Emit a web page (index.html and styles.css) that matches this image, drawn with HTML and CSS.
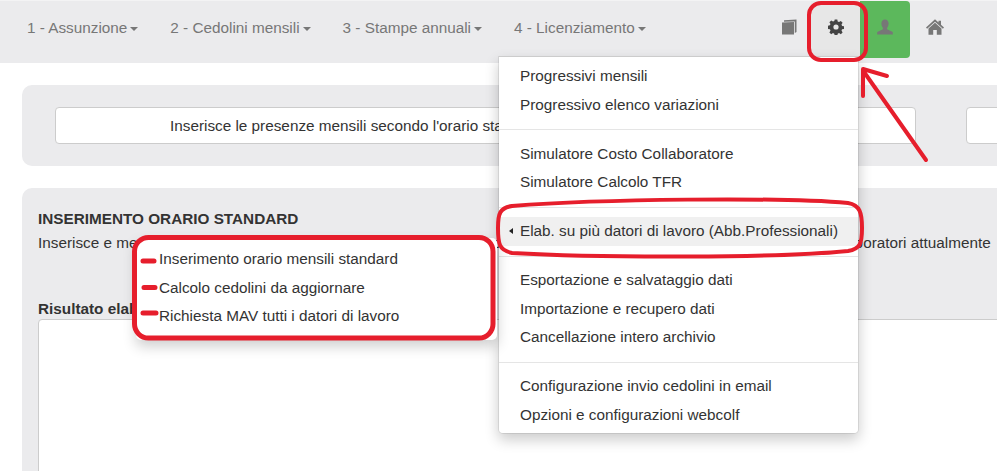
FILE: index.html
```html
<!DOCTYPE html>
<html lang="it">
<head>
<meta charset="utf-8">
<title>Webcolf</title>
<link rel="stylesheet" href="styles.css">
</head>
<body>
<nav class="navbar">
  <ul class="nav-left">
    <li>1 - Assunzione<span class="caret"></span></li>
    <li>2 - Cedolini mensili<span class="caret"></span></li>
    <li>3 - Stampe annuali<span class="caret"></span></li>
    <li>4 - Licenziamento<span class="caret"></span></li>
  </ul>
  <ul class="nav-right">
    <li class="cell cell-book">
      <svg class="icon" viewBox="0 0 16 16"><path class="ic" d="M3 1.200 15.500.5V13L13.800 14V2.500L3 2.800Z"/><path class="ic" d="M1 3.400 13 3V15.500H1Z"/></svg>
    </li>
    <li class="cell active">
      <svg class="icon" viewBox="0 0 16 16"><path class="ic-dark" fill-rule="evenodd" d="M6.700.5h2.600l.4 2 1.300.6 1.800-1.100 1.800 1.800-1.100 1.800.6 1.300 2 .4v2.600l-2 .4-.6 1.300 1.100 1.800-1.800 1.800-1.800-1.100-1.300.6-.4 2H6.700l-.4-2-1.300-.6-1.800 1.100-1.800-1.800 1.100-1.800-.6-1.300-2-.4V6.700l2-.4.6-1.300L1.400 3.200l1.800-1.800L5 2.500l1.300-.6ZM8 5.400a2.600 2.600 0 1 0 0 5.200 2.600 2.600 0 0 0 0-5.200Z"/></svg>
    </li>
    <li class="cell user">
      <svg class="icon" viewBox="0 0 16 16"><path class="ic" d="M8 .5c2.400 0 3.600 1.800 3.600 4 0 1.800-.7 3.300-1.500 4.200v1.500L15.800 13v2.500H.2V13l5.700-2.800V8.700C5.100 7.800 4.400 6.300 4.400 4.500c0-2.200 1.200-4 3.600-4Z"/></svg>
    </li>
    <li class="cell">
      <svg class="icon icon-home" viewBox="0 0 18 16"><path class="ic" d="M9 .3 12.500 3.500V1.800h2.500v4l3 2.800-1.100 1.200L9 2.800 1.100 9.800 0 8.600Z"/><path class="ic" d="M9 3.800 15.500 9.600V15.700H10.800V11H7.200V15.700H2.500V9.600Z"/></svg>
    </li>
  </ul>
</nav>

<main class="page">
  <section class="panel panel-top">
    <div class="box box-main">Inserisce le presenze mensili secondo l'orario standard</div>
    <div class="box box-side"></div>
  </section>
  <section class="panel panel-body">
    <h2 class="title">INSERIMENTO ORARIO STANDARD</h2>
    <p class="desc">Inserisce e memorizza le presenze mensili secondo l'orario standard impostato nel contratto per tutti i dipendenti e i collaboratori attualmente</p>
    <label class="result-label">Risultato elaborazione</label>
    <div class="result"></div>
  </section>
</main>

<ul class="menu">
  <li>Progressivi mensili</li>
  <li>Progressivo elenco variazioni</li>
  <li class="divider"></li>
  <li>Simulatore Costo Collaboratore</li>
  <li>Simulatore Calcolo TFR</li>
  <li class="divider"></li>
  <li class="open"><span class="caret-left"></span>Elab. su più datori di lavoro (Abb.Professionali)</li>
  <li class="divider"></li>
  <li>Esportazione e salvataggio dati</li>
  <li>Importazione e recupero dati</li>
  <li>Cancellazione intero archivio</li>
  <li class="divider"></li>
  <li>Configurazione invio cedolini in email</li>
  <li>Opzioni e configurazioni webcolf</li>
</ul>

<ul class="submenu">
  <li>Inserimento orario mensili standard</li>
  <li>Calcolo cedolini da aggiornare</li>
  <li>Richiesta MAV tutti i datori di lavoro</li>
</ul>

<svg class="marks" viewBox="0 0 997 471">
  <rect class="mark" x="809" y="3" width="57" height="57" rx="12"/>
  <path class="mark" d="M926 160 864 72M863 96 863 69 887 76"/>
  <path class="mark" d="M512 206C600 199 780 197 848 203 860 205 862 213 862 228 862 244 860 249 848 251 780 258 600 258 512 253 499 250 498 244 498 228 498 213 500 208 512 206Z"/>
  <rect class="mark mark-wide" x="134.500" y="237.500" width="358.500" height="100.500" rx="14"/>
  <path class="mark mark-wide" d="M143 261H154M144 287.500H155M143 313H156"/>
</svg>
</body>
</html>
```
FILE: styles.css
```css
* { box-sizing: border-box; }
html, body { margin: 0; height: 471px; overflow: hidden; background: #fff; }
body { position: relative; font: 15.3px/20px "Liberation Sans", Arial, sans-serif; color: #333; }
ul { list-style: none; margin: 0; padding: 0; }

.navbar { display: flex; justify-content: space-between; height: 63px; background: #ebebed; border-top: 1px solid #f3f3f4; padding-left: 11px; padding-right: 38px; }
.nav-left { display: flex; color: #777; }
.nav-left li { padding: 17px 16px 0; height: 57px; white-space: nowrap; }
.caret { display: inline-block; margin-left: 3px; vertical-align: middle; border-top: 4px solid #777; border-left: 4px solid transparent; border-right: 4px solid transparent; }
.nav-right { display: flex; }
.cell { width: 49px; height: 57px; display: flex; justify-content: center; padding-top: 18px; }
.cell-book { padding-left: 4px; }
.active { background: #e7e7e7; }
.user { background: #5cb85c; width: 50px; border-radius: 0 4px 4px 0; }
.icon { width: 16px; height: 16px; display: block; }
.icon-home { width: 18px; }
.ic { fill: #777; }
.ic-dark { fill: #444; }

.page { width: 1300px; padding: 22px 0 0 22px; }
.panel { background: #ebebed; border-radius: 10px; }
.panel-top { display: flex; gap: 50px; height: 81px; padding: 22px 33px; margin-bottom: 22px; }
.box { background: #fff; border: 1px solid #ccc; border-radius: 4px; height: 37px; line-height: 35px; }
.box-main { width: 861px; padding-left: 114px; white-space: nowrap; }
.box-side { width: 200px; }
.panel-body { padding: 21px 16px 0; height: 400px; }
.title { margin: 0; font-size: 15.3px; line-height: 20px; font-weight: 700; color: #333; }
.desc { margin: 3px 0 0; padding-top: 1px; white-space: nowrap; }
.result-label { display: block; margin-top: 46px; font-weight: 700; }
.result { height: 200px; background: #fff; border: 1px solid #ccc; border-radius: 4px; }

.menu { position: absolute; left: 498px; top: 56px; width: 361px; padding: 5px 0 4px; background: #fff; border: 1px solid rgba(0,0,0,.08); border-top-color: #ccc; border-radius: 0 0 5px 5px; background-clip: padding-box; box-shadow: 0 6px 14px rgba(0,0,0,.2); }
.menu li { position: relative; height: 28.5px; line-height: 28.5px; padding-left: 21px; white-space: nowrap; }
.menu .divider { height: 1px; margin: 10px 0 9.5px; padding: 0; background: #e5e5e5; }
.menu .open { background: #f0f0f0; }
.caret-left { position: absolute; left: 10px; top: 11px; border-right: 4px solid #222; border-top: 3.5px solid transparent; border-bottom: 3.5px solid transparent; }

.submenu { position: absolute; left: 136px; top: 238px; width: 361px; height: 102px; padding: 7px 0 0 23px; background: #fff; border-radius: 5px; box-shadow: 0 6px 14px rgba(0,0,0,.2); }
.submenu li { height: 28.5px; line-height: 28.5px; white-space: nowrap; }

.marks { position: absolute; left: 0; top: 0; width: 997px; height: 471px; pointer-events: none; }
.mark { fill: none; stroke: #e61e2c; stroke-width: 4; stroke-linecap: round; stroke-linejoin: round; }
.mark-wide { stroke-width: 5; }
```
